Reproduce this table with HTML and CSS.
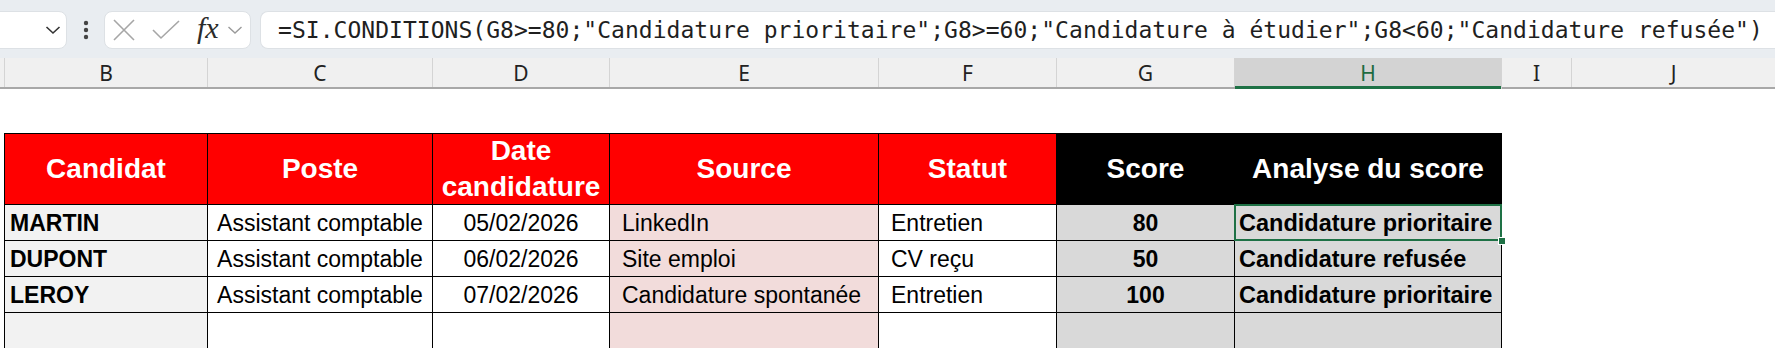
FILE: index.html
```html
<!DOCTYPE html>
<html lang="fr">
<head>
<meta charset="utf-8">
<title>Candidatures</title>
<link rel="stylesheet" href="styles.css">
</head>
<body>
<div class="toolbar">
  <div class="namebox">
    <svg class="chev" width="16" height="10" viewBox="0 0 16 10"><path d="M1.5 2 L8 8 L14.5 2" fill="none" stroke="#333" stroke-width="1.6"/></svg>
  </div>
  <div class="dots">
    <svg width="6" height="20" viewBox="0 0 6 20"><circle cx="3" cy="3" r="2.2" fill="#444"/><circle cx="3" cy="10" r="2.2" fill="#444"/><circle cx="3" cy="17" r="2.2" fill="#444"/></svg>
  </div>
  <div class="fxbox">
    <svg class="ic-x" width="22" height="22" viewBox="0 0 22 22"><path d="M1 1 L21 21 M21 1 L1 21" stroke="#a6a6a6" stroke-width="1.6" fill="none"/></svg>
    <svg class="ic-check" width="28" height="20" viewBox="0 0 28 20"><path d="M1 10 L9 18 L27 1" stroke="#a6a6a6" stroke-width="1.6" fill="none"/></svg>
    <span class="fx">fx</span>
    <svg class="chev-s" width="16" height="10" viewBox="0 0 16 10"><path d="M1.5 2 L8 8 L14.5 2" fill="none" stroke="#9a9a9a" stroke-width="1.4"/></svg>
  </div>
  <div class="formula">=SI.CONDITIONS(G8&gt;=80;"Candidature prioritaire";G8&gt;=60;"Candidature à étudier";G8&lt;60;"Candidature refusée")</div>
</div>

<div class="colheads">
  <div class="ch ch-a"></div>
  <div class="ch ch-b">B</div>
  <div class="ch ch-c">C</div>
  <div class="ch ch-d">D</div>
  <div class="ch ch-e">E</div>
  <div class="ch ch-f">F</div>
  <div class="ch ch-g">G</div>
  <div class="ch ch-h sel">H</div>
  <div class="ch ch-i">I</div>
  <div class="ch ch-j">J</div>
</div>

<div class="sheet">
  <div class="grid">
    <div class="th red">Candidat</div>
    <div class="th red">Poste</div>
    <div class="th red">Date candidature</div>
    <div class="th red">Source</div>
    <div class="th red">Statut</div>
    <div class="th black">Score</div>
    <div class="th black">Analyse du score</div>

    <div class="td name">MARTIN</div>
    <div class="td center">Assistant comptable</div>
    <div class="td center">05/02/2026</div>
    <div class="td pink">LinkedIn</div>
    <div class="td left">Entretien</div>
    <div class="td score">80</div>
    <div class="td result active">Candidature prioritaire</div>

    <div class="td name">DUPONT</div>
    <div class="td center">Assistant comptable</div>
    <div class="td center">06/02/2026</div>
    <div class="td pink">Site emploi</div>
    <div class="td left">CV reçu</div>
    <div class="td score">50</div>
    <div class="td result">Candidature refusée</div>

    <div class="td name">LEROY</div>
    <div class="td center">Assistant comptable</div>
    <div class="td center">07/02/2026</div>
    <div class="td pink">Candidature spontanée</div>
    <div class="td left">Entretien</div>
    <div class="td score">100</div>
    <div class="td result">Candidature prioritaire</div>

    <div class="td name"></div>
    <div class="td center"></div>
    <div class="td center"></div>
    <div class="td pink"></div>
    <div class="td left"></div>
    <div class="td score"></div>
    <div class="td result"></div>
  </div>
</div>
</body>
</html>
```

FILE: styles.css
```css
html, body {
  margin: 0;
  padding: 0;
  background: #ffffff;
  overflow: hidden;
}
body {
  width: 1775px;
  height: 348px;
  font-family: "Liberation Sans", Arial, sans-serif;
}

/* ---------- formula toolbar ---------- */
.toolbar {
  height: 58px;
  background: #e9edf1;
  display: flex;
  align-items: center;
  box-sizing: border-box;
  padding-top: 1px;
}
.namebox {
  width: 76px;
  margin-left: -9px;
  height: 38px;
  background: #fff;
  border: 1px solid #dde1e5;
  border-radius: 8px;
  box-sizing: border-box;
  display: flex;
  align-items: center;
  justify-content: flex-end;
  padding-right: 5px;
}
.dots {
  width: 37px;
  display: flex;
  justify-content: center;
  align-items: center;
}
.fxbox {
  width: 147px;
  height: 38px;
  background: #fff;
  border: 1px solid #dde1e5;
  border-radius: 8px;
  box-sizing: border-box;
  display: flex;
  align-items: center;
  padding-left: 8px;
}
.ic-x { margin-right: 17px; }
.ic-check { margin-right: 17px; }
.fx {
  font-family: "Liberation Serif", "DejaVu Serif", serif;
  font-style: italic;
  font-size: 30px;
  color: #2b2b2b;
  line-height: 1;
  margin-top: -4px;
  margin-right: 8px;
}
.formula {
  margin-left: 9px;
  flex: 1;
  height: 38px;
  background: #fff;
  border: 1px solid #dde1e5;
  border-right: none;
  border-radius: 8px 0 0 8px;
  box-sizing: border-box;
  padding-left: 17px;
  display: flex;
  align-items: center;
  font-family: "DejaVu Sans Mono", "Liberation Mono", monospace;
  font-size: 23px;
  letter-spacing: 0.03px;
  color: #1f1f1f;
  white-space: nowrap;
  overflow: hidden;
}

/* ---------- column headers ---------- */
.colheads {
  display: flex;
  height: 31px;
  background: #f0f0f0;
  border-bottom: 2px solid #a8a8a8;
  box-sizing: border-box;
}
.ch {
  box-sizing: border-box;
  border-right: 1px solid #d4d4d4;
  display: flex;
  align-items: center;
  justify-content: center;
  font-family: "Noto Sans", "Open Sans", sans-serif;
  font-size: 21px;
  color: #222;
  flex: none;
}
.ch-a { width: 5px; }
.ch-b { width: 203px; }
.ch-c { width: 225px; }
.ch-d { width: 177px; }
.ch-e { width: 269px; }
.ch-f { width: 178px; }
.ch-g { width: 178px; }
.ch-h { width: 267px; }
.ch-i { width: 70px; }
.ch-j { flex: 1; border-right: none; }
.ch.sel {
  background: #d3d3d3;
  color: #1e6b40;
  box-shadow: inset 0 -3px 0 #1e7145;
  margin-bottom: -2px;
  padding-bottom: 2px;
}

/* ---------- sheet ---------- */
.sheet {
  padding-top: 44px;
  padding-left: 4px;
}
.grid {
  display: grid;
  grid-template-columns: 202px 224px 176px 268px 177px 177px 266px;
  grid-template-rows: 70px 35px 35px 35px 40px;
  gap: 1px;
  padding: 1px;
  background: #000;
  width: max-content;
}
.th {
  color: #fff;
  font-weight: bold;
  font-size: 28px;
  line-height: 36px;
  display: flex;
  align-items: center;
  justify-content: center;
  text-align: center;
  padding: 0 8px;
}
.th.red { background: #ff0000; }
.th.black { background: #000; }

.td {
  font-size: 23px;
  color: #000;
  display: flex;
  align-items: center;
  white-space: nowrap;
  background: #fff;
  padding-top: 1px;
}
.td.name {
  background: #f2f2f2;
  font-weight: bold;
  padding-left: 5px;
}
.td.center { justify-content: center; }
.td.pink {
  background: #f2dcdb;
  padding-left: 12px;
}
.td.left { padding-left: 12px; }
.td.score {
  background: #d9d9d9;
  font-weight: bold;
  justify-content: center;
}
.td.result {
  background: #d9d9d9;
  font-weight: bold;
  font-size: 23.5px;
  padding-left: 4px;
}
.td.active { position: relative; }
.td.active::after {
  content: "";
  position: absolute;
  left: -1px;
  top: -1px;
  right: -1px;
  bottom: -1px;
  border: 2px solid #1e7145;
  pointer-events: none;
}
.td.active::before {
  content: "";
  position: absolute;
  right: -5px;
  bottom: -5px;
  width: 6px;
  height: 6px;
  background: #1e7145;
  border: 1px solid #fff;
  z-index: 2;
}
```
